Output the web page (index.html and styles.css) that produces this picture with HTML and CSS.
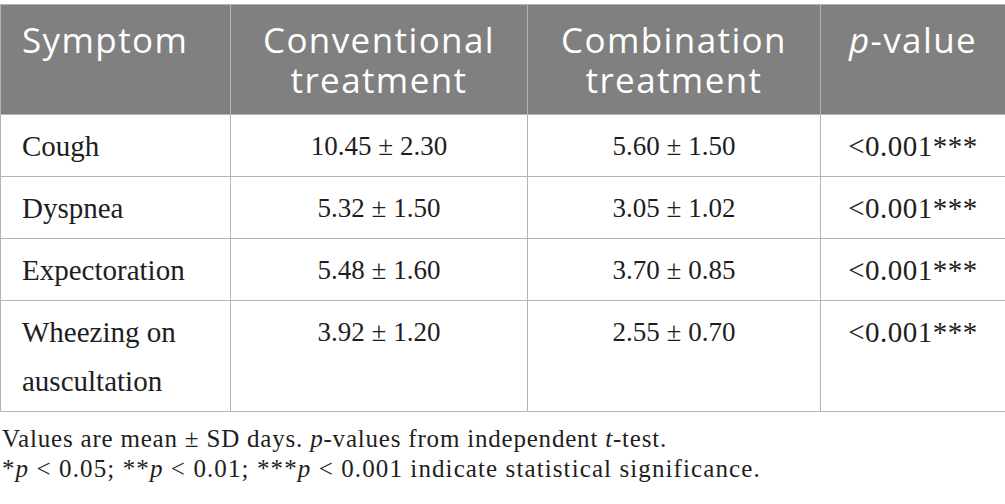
FILE: index.html
```html
<!DOCTYPE html>
<html lang="en">
<head>
<meta charset="utf-8">
<title>Symptom resolution</title>
<link rel="stylesheet" href="styles.css">
</head>
<body>
<table class="data">
  <colgroup>
    <col class="c1"><col class="c2"><col class="c3"><col class="c4">
  </colgroup>
  <thead>
    <tr>
      <th class="left">Symptom</th>
      <th>Conventional treatment</th>
      <th>Combination treatment</th>
      <th><i>p</i>-value</th>
    </tr>
  </thead>
  <tbody>
    <tr><td class="left">Cough</td><td>10.45 ± 2.30</td><td>5.60 ± 1.50</td><td class="pv">&lt;0.001***</td></tr>
    <tr><td class="left">Dyspnea</td><td>5.32 ± 1.50</td><td>3.05 ± 1.02</td><td class="pv">&lt;0.001***</td></tr>
    <tr><td class="left">Expectoration</td><td>5.48 ± 1.60</td><td>3.70 ± 0.85</td><td class="pv">&lt;0.001***</td></tr>
    <tr><td class="left">Wheezing on auscultation</td><td>3.92 ± 1.20</td><td>2.55 ± 0.70</td><td class="pv">&lt;0.001***</td></tr>
  </tbody>
</table>
<div class="notes">
  <p>Values are mean ± SD days. <i>p</i>-values from independent <i>t</i>-test.</p>
  <p class="sig">*<i>p</i> &lt; 0.05; **<i>p</i> &lt; 0.01; ***<i>p</i> &lt; 0.001 indicate statistical significance.</p>
</div>
</body>
</html>
```
FILE: styles.css
```css
html, body {
  margin: 0;
  padding: 0;
  background: #ffffff;
}
body {
  padding-top: 4px;
  color: #1e1e1e;
  font-family: "Liberation Serif", "Times New Roman", serif;
}
.data {
  width: 1005px;
  border-collapse: collapse;
  table-layout: fixed;
}
.c1 { width: 230px; }
.c2 { width: 297px; }
.c3 { width: 293px; }
.c4 { width: 185px; }
.data th {
  background: #808080;
  color: #ffffff;
  font-family: "Open Sans", "DejaVu Sans", sans-serif;
  font-weight: 400;
  font-size: 35px;
  letter-spacing: 1.4px;
  line-height: 40px;
  text-align: center;
  vertical-align: top;
  padding: 15px 14px 14px;
  border: 1px solid #b4b4b4;
}
.data td {
  font-size: 27px;
  line-height: 49px;
  text-align: center;
  vertical-align: top;
  padding: 7px 20px 5px;
  border: 1px solid #b4b4b4;
}
.data td.left {
  font-size: 29px;
}
.data td.pv {
  font-size: 29px;
  letter-spacing: 0.5px;
}
.data .left {
  text-align: left;
  padding-left: 21px;
}
.notes {
  margin-top: 12px;
  font-size: 25px;
  letter-spacing: 0.8px;
  line-height: 30px;
}
.notes p {
  margin: 0;
  padding-left: 2px;
}
.notes .sig {
  letter-spacing: 1.1px;
}
```
